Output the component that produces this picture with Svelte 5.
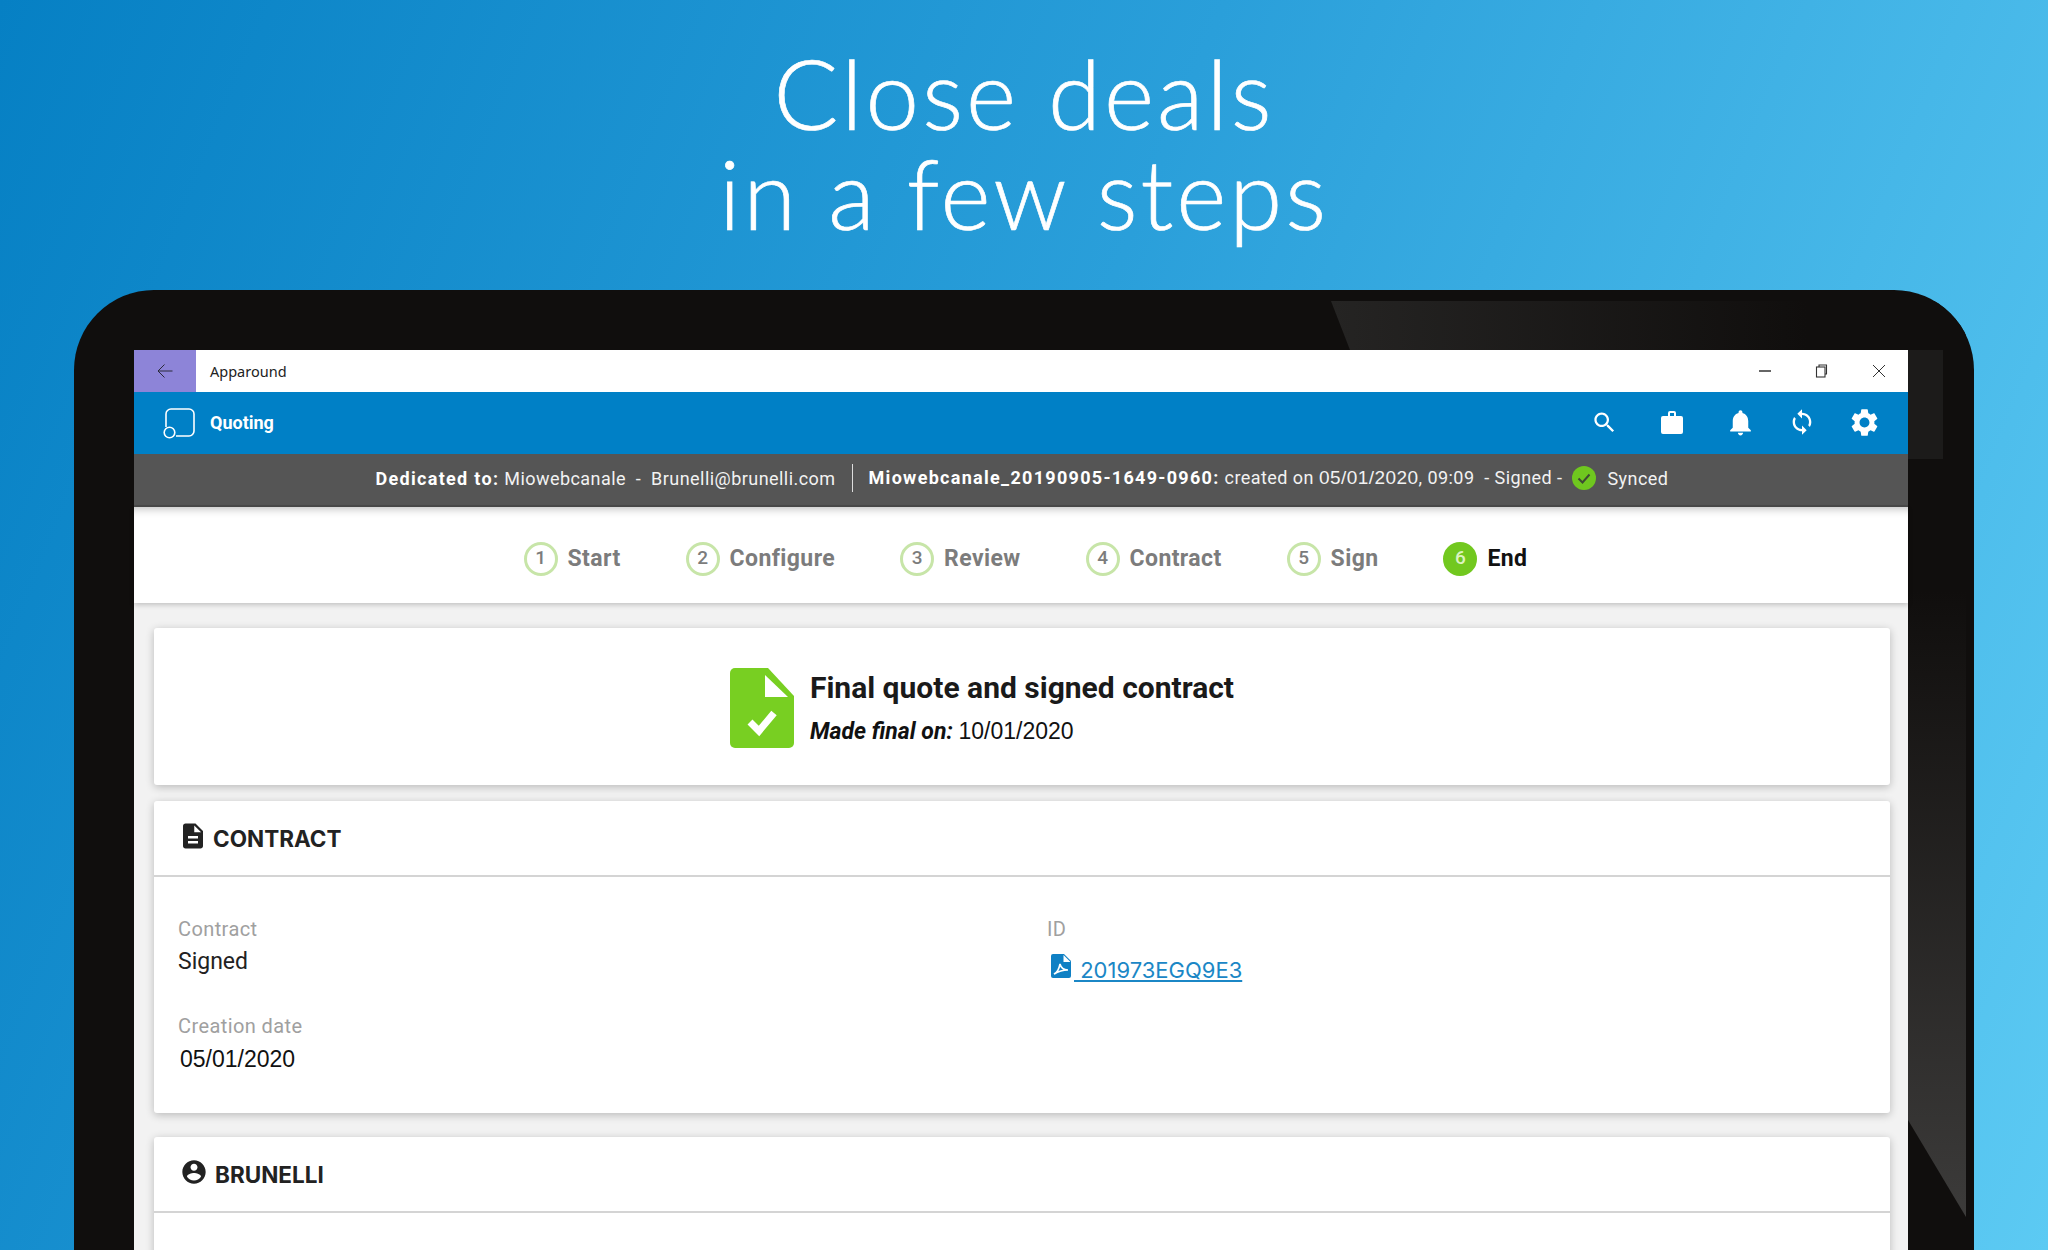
<script>
	const steps = [
		{ n: 1, label: 'Start' },
		{ n: 2, label: 'Configure' },
		{ n: 3, label: 'Review' },
		{ n: 4, label: 'Contract' },
		{ n: 5, label: 'Sign' },
		{ n: 6, label: 'End', active: true }
	];
</script>

<div class="page">
	<h1 class="headline">Close deals<br />in a few steps</h1>

	<div class="tablet">
		<svg class="glare" width="1900" height="960" viewBox="0 0 1900 960">
			<defs>
				<linearGradient id="glareTop" x1="0" y1="0" x2="1" y2="0">
					<stop offset="0" stop-color="#252423" />
					<stop offset="0.75" stop-color="#100e0d" />
				</linearGradient>
				<linearGradient id="glareSide" gradientUnits="userSpaceOnUse" x1="0" y1="300" x2="0" y2="927">
					<stop offset="0" stop-color="#100e0d" />
					<stop offset="1" stop-color="#3c3b3a" />
				</linearGradient>
			</defs>
			<polygon points="1257,11 1892,11 1892,60 1276,60" fill="url(#glareTop)" />
			<polygon points="1834,60 1892,60 1892,927 1834,830" fill="url(#glareSide)" />
			<rect x="1834" y="60" width="35" height="109" fill="#1c1b1a" />
		</svg>

		<div class="window">
			<div class="titlebar">
				<div class="back">
					<svg width="16" height="16" viewBox="0 0 16 16" fill="none" stroke="#2b2b3a" stroke-width="1">
						<path d="M15.500 8H1M7.500 1.500 1 8l6.500 6.500" />
					</svg>
				</div>
				<span class="app-name">Apparound</span>
				<div class="win-controls">
					<svg width="14" height="14" viewBox="0 0 14 14" fill="none" stroke="#333" stroke-width="1.300">
						<path d="M1 7h12" />
					</svg>
					<svg width="14" height="14" viewBox="0 0 14 14" fill="none" stroke="#333" stroke-width="1.100">
						<path d="M4 3V1h7.500v9H10" />
						<rect x="1.500" y="3" width="8.500" height="10" />
					</svg>
					<svg width="14" height="14" viewBox="0 0 14 14" fill="none" stroke="#333" stroke-width="1">
						<path d="M1 1l12 12M13 1 1 13" />
					</svg>
				</div>
			</div>

			<header class="appbar">
				<svg class="logo" width="32" height="32" viewBox="0 0 32 32" fill="none" stroke="#fff" stroke-width="1.600">
					<path d="M3 20V7a5 5 0 0 1 5-5h18a5 5 0 0 1 5 5v17a5 5 0 0 1-5 5H13" />
					<circle cx="6.500" cy="25.500" r="5.300" />
				</svg>
				<span class="app-title">Quoting</span>
				<div class="actions">
					<svg class="i-search" width="27" height="27" viewBox="0 0 24 24" fill="#fff">
						<path d="M15.500 14h-.79l-.28-.27C15.410 12.590 16 11.110 16 9.500 16 5.910 13.090 3 9.500 3S3 5.910 3 9.500 5.910 16 9.500 16c1.610 0 3.090-.59 4.230-1.570l.27.28v.79l5 4.990L20.490 19l-4.990-5zm-6 0C7.010 14 5 11.990 5 9.500S7.010 5 9.500 5 14 7.010 14 9.500 11.990 14 9.500 14z" />
					</svg>
					<svg class="i-bag" width="24" height="24" viewBox="0 0 24 24" fill="#fff">
						<path d="M3 6h5V3a2 2 0 0 1 2-2h4a2 2 0 0 1 2 2v3h5a2 2 0 0 1 2 2v14a2 2 0 0 1-2 2H3a2 2 0 0 1-2-2V8a2 2 0 0 1 2-2zm7-3v3h4V3h-4z" fill-rule="evenodd" />
					</svg>
					<svg class="i-bell" width="31" height="31" viewBox="0 0 24 24" fill="#fff">
						<path d="M12 22c1.100 0 2-.9 2-2h-4c0 1.100.89 2 2 2zm6-6v-5c0-3.070-1.640-5.640-4.500-6.320V4c0-.83-.67-1.500-1.500-1.500s-1.500.67-1.500 1.500v.68C7.630 5.360 6 7.920 6 11v5l-2 2v1h16v-1l-2-2z" />
					</svg>
					<svg class="i-sync" width="28" height="28" viewBox="0 0 24 24" fill="#fff">
						<path d="M12 4V1L8 5l4 4V6c3.310 0 6 2.690 6 6 0 1.010-.25 1.970-.7 2.800l1.460 1.460C19.540 15.030 20 13.570 20 12c0-4.420-3.580-8-8-8zm0 14c-3.310 0-6-2.690-6-6 0-1.010.25-1.970.7-2.800L5.240 7.740C4.460 8.970 4 10.430 4 12c0 4.420 3.580 8 8 8v3l4-4-4-4v3z" />
					</svg>
					<svg class="i-gear" width="33" height="33" viewBox="0 0 24 24" fill="#fff">
						<path d="M19.140 12.940c.04-.3.06-.61.06-.94 0-.32-.02-.64-.07-.94l2.030-1.580c.18-.14.23-.41.12-.61l-1.920-3.320c-.12-.22-.37-.29-.59-.22l-2.390.96c-.5-.38-1.030-.7-1.620-.94l-.36-2.540c-.04-.24-.24-.41-.48-.41h-3.840c-.24 0-.43.17-.47.41l-.36 2.540c-.59.24-1.130.57-1.620.94l-2.390-.96c-.22-.08-.47 0-.59.22L2.740 8.870c-.12.21-.08.47.12.61l2.030 1.580c-.05.3-.09.63-.09.94s.02.64.07.94l-2.030 1.580c-.18.14-.23.41-.12.61l1.920 3.320c.12.22.37.29.59.22l2.390-.96c.5.38 1.030.7 1.620.94l.36 2.540c.05.24.24.41.48.41h3.840c.24 0 .44-.17.47-.41l.36-2.540c.59-.24 1.130-.56 1.620-.94l2.390.96c.22.08.47 0 .59-.22l1.920-3.320c.12-.22.07-.47-.12-.61l-2.010-1.580zM12 15.600c-1.980 0-3.600-1.620-3.600-3.600s1.620-3.600 3.600-3.600 3.600 1.620 3.600 3.600-1.620 3.600-3.600 3.600z" />
					</svg>
				</div>
			</header>

			<div class="infobar">
				<span><b>Dedicated to:</b> Miowebcanale &nbsp;-&nbsp; Brunelli@brunelli.com</span>
				<i class="sep"></i>
				<span><b>Miowebcanale_20190905-1649-0960:</b> created on <span class="num">05/01/2020</span>, 09:09 &nbsp;- Signed -</span>
				<svg class="synced" width="24" height="24" viewBox="0 0 24 24">
					<circle cx="12" cy="12" r="12" fill="#6fc71f" />
					<path d="M6.500 12.500l4 4 7-8" fill="none" stroke="#3d4a33" stroke-width="2" />
				</svg>
				<span>Synced</span>
			</div>

			<nav class="stepper">
				{#each steps as step}
					<div class="step" class:active={step.active}>
						<span class="bullet">{step.n}</span>
						<span class="step-label">{step.label}</span>
					</div>
				{/each}
			</nav>

			<main class="content">
				<section class="card final">
					<svg width="64" height="80" viewBox="0 0 64 80">
						<path d="M5 0h33l26 28v47a5 5 0 0 1-5 5H5a5 5 0 0 1-5-5V5a5 5 0 0 1 5-5z" fill="#78cf22" />
						<path d="M35 7v22h23z" fill="#fff" />
						<path d="M20 54l9 9 15-18" fill="none" stroke="#fff" stroke-width="7" />
					</svg>
					<div class="final-text">
						<h2>Final quote and signed contract</h2>
						<p><em>Made final on:</em> <span class="num">10/01/2020</span></p>
					</div>
				</section>

				<section class="card">
					<div class="card-head">
						<svg width="30" height="30" viewBox="0 0 24 24" fill="#222">
							<path d="M14 2H6c-1.100 0-1.990.9-1.990 2L4 20c0 1.100.89 2 1.990 2H18c1.100 0 2-.9 2-2V8l-6-6zm2 16H8v-2h8v2zm0-4H8v-2h8v2zm-3-5V3.500L18.500 9H13z" />
						</svg>
						<h3>CONTRACT</h3>
					</div>
					<div class="fields">
						<div class="col">
							<div class="field">
								<span class="label">Contract</span>
								<span class="value">Signed</span>
							</div>
							<div class="field">
								<span class="label">Creation date</span>
								<span class="value num date">05/01/2020</span>
							</div>
						</div>
						<div class="col">
							<div class="field">
								<span class="label">ID</span>
								<a class="link" href="#top">
									<svg width="20" height="24" viewBox="0 0 20 24">
										<path d="M2 0h11l7 7v15a2 2 0 0 1-2 2H2a2 2 0 0 1-2-2V2a2 2 0 0 1 2-2z" fill="#0f80c4" />
										<path d="M12.500 1v7h7z" fill="#fff" />
										<path d="M3 20c3-1 5-5 6-10 1 4 3 6 8 6-5 0-9 1-14 4z" fill="none" stroke="#fff" stroke-width="1.600" />
									</svg>
									<span>&nbsp;201973EGQ9E3</span>
								</a>
							</div>
						</div>
					</div>
				</section>

				<section class="card third">
					<div class="card-head">
						<svg class="person" width="28" height="28" viewBox="0 0 24 24" fill="#222">
							<path d="M12 2C6.480 2 2 6.480 2 12s4.480 10 10 10 10-4.480 10-10S17.520 2 12 2zm0 3c1.660 0 3 1.340 3 3s-1.340 3-3 3-3-1.340-3-3 1.340-3 3-3zm0 14.200c-2.500 0-4.710-1.280-6-3.220.030-1.990 4-3.080 6-3.080 1.990 0 5.970 1.090 6 3.080-1.290 1.940-3.500 3.220-6 3.220z" />
						</svg>
						<h3>BRUNELLI</h3>
					</div>
					<div class="card-rest"></div>
				</section>
			</main>
		</div>
	</div>
</div>

<style>
	:global(body) {
		margin: 0;
	}

	.page {
		height: 1250px;
		overflow: hidden;
		background: linear-gradient(112deg, #0680c4 0%, #2a9fda 48%, #5ccaf3 100%);
		font-family: Roboto, sans-serif;
	}

	.headline {
		margin: 0;
		height: 290px;
		box-sizing: border-box;
		padding-top: 43px;
		text-align: center;
		font-family: Lato, sans-serif;
		font-weight: 300;
		font-size: 96px;
		line-height: 100px;
		letter-spacing: 3px;
		-webkit-text-stroke: 0.7px #fff;
		color: #fff;
	}

	.tablet {
		position: relative;
		width: 1900px;
		margin-left: 74px;
		height: 960px;
		box-sizing: border-box;
		padding: 60px 66px 0 60px;
		overflow: hidden;
		background: #100e0d;
		border-radius: 80px 80px 0 0;
	}

	.glare {
		position: absolute;
		left: 0;
		top: 0;
	}

	.window {
		position: relative;
		height: 900px;
		display: flex;
		flex-direction: column;
		background: #f2f2f2;
	}

	.titlebar {
		height: 42px;
		flex: none;
		display: flex;
		align-items: center;
		background: #fff;
	}

	.back {
		width: 62px;
		height: 42px;
		display: flex;
		align-items: center;
		justify-content: center;
		background: #8d84d8;
	}

	.app-name {
		margin-left: 14px;
		font-family: 'Noto Sans', sans-serif;
		font-size: 14.500px;
		color: #222;
	}

	.win-controls {
		margin-left: auto;
		margin-right: 22px;
		display: flex;
		gap: 43px;
	}

	.appbar {
		height: 62px;
		flex: none;
		display: flex;
		align-items: center;
		padding: 0 27px 2px 29px;
		box-sizing: border-box;
		background: #0080c6;
	}

	.logo {
		margin-top: 2px;
	}

	.app-title {
		margin-left: 15px;
		font-size: 18px;
		font-weight: 700;
		color: #fff;
	}

	.actions {
		margin-left: auto;
		display: flex;
		align-items: center;
	}

	.i-bag {
		margin-left: 42px;
	}

	.i-bell {
		margin-left: 41px;
	}

	.i-sync {
		margin-left: 32px;
	}

	.i-gear {
		margin-left: 32px;
	}

	.infobar {
		height: 53px;
		flex: none;
		box-sizing: border-box;
		display: flex;
		align-items: center;
		justify-content: center;
		padding-left: 2px;
		padding-bottom: 3px;
		background: #555;
		border-bottom: 2px solid #4a4a4a;
		font-size: 18px;
		letter-spacing: 0.45px;
		color: #f2f2f2;
		white-space: nowrap;
	}

	.infobar b {
		font-weight: 700;
		letter-spacing: 1.300px;
		color: #fff;
	}

	.sep {
		width: 1px;
		height: 28px;
		margin: 0 16px;
		background: #ddd;
	}

	.synced {
		margin: 0 11px 0 10px;
	}

	.num {
		font-family: 'Liberation Sans', sans-serif;
	}

	.infobar .num {
		font-size: 19px;
	}

	.stepper {
		height: 96px;
		flex: none;
		box-sizing: border-box;
		display: flex;
		align-items: center;
		justify-content: center;
		gap: 65px;
		padding: 7px 0 0 9px;
		background: #fff;
		box-shadow: inset 0 9px 8px -7px rgba(0, 0, 0, 0.25), 0 2px 5px rgba(0, 0, 0, 0.2);
		position: relative;
	}

	.step {
		display: flex;
		align-items: center;
		gap: 10px;
		font-size: 23px;
		font-weight: 700;
		letter-spacing: 0.4px;
		color: #7c7c7c;
	}

	.bullet {
		width: 34px;
		height: 34px;
		box-sizing: border-box;
		display: flex;
		align-items: center;
		justify-content: center;
		padding-bottom: 2px;
		border: 3px solid #c7e5a8;
		border-radius: 50%;
		font-size: 19px;
		font-weight: 500;
		letter-spacing: 0;
	}

	.step.active {
		color: #111;
	}

	.step.active .bullet {
		border-color: #72c81f;
		background: #72c81f;
		color: #dcf3c0;
	}

	.content {
		flex: 1;
		display: flex;
		flex-direction: column;
		gap: 16px;
		padding: 25px 18px 0 20px;
	}

	.card {
		flex: none;
		background: #fff;
		border-radius: 3px;
		box-shadow: 0 2px 8px rgba(0, 0, 0, 0.24);
	}

	.third {
		margin-top: 8px;
	}

	.final {
		height: 157px;
		display: flex;
		align-items: center;
		justify-content: center;
		gap: 16px;
		padding: 3px 80px 0 0;
		box-sizing: border-box;
	}

	.final-text h2 {
		margin: 0 0 12px;
		font-size: 30px;
		line-height: 34px;
		font-weight: 700;
		color: #1a1a1a;
	}

	.final-text p {
		margin: 0;
		font-size: 23px;
		line-height: 28px;
		color: #111;
	}

	.final-text em {
		font-weight: 700;
		font-style: italic;
	}

	.card-head {
		height: 76px;
		display: flex;
		align-items: center;
		gap: 5px;
		padding-left: 24px;
		border-bottom: 2px solid #d4d4d4;
		box-sizing: border-box;
	}

	.card-head svg {
		margin-top: -5px;
	}

	.card-head .person {
		margin-left: 2px;
		margin-right: 2px;
	}

	.card-head h3 {
		margin: 0;
		font-family: Inter, sans-serif;
		font-size: 22.500px;
		font-weight: 700;
		color: #222;
	}

	.fields {
		height: 236px;
		box-sizing: border-box;
		display: grid;
		grid-template-columns: 869px 1fr;
		padding: 40px 24px 0;
	}

	.col {
		display: flex;
		flex-direction: column;
		gap: 39px;
	}

	.field {
		display: flex;
		flex-direction: column;
		gap: 8px;
	}

	.label {
		font-size: 20px;
		line-height: 24px;
		letter-spacing: 0.4px;
		color: #a0a0a0;
	}

	.value {
		font-size: 23px;
		line-height: 26px;
		color: #222;
	}

	.date {
		margin-left: 2px;
		color: #111;
	}

	.link {
		display: flex;
		align-items: flex-end;
		gap: 3px;
		margin: 5px 0 0 4px;
		font-family: Inter, sans-serif;
		font-size: 22px;
		line-height: 26px;
		color: #1b87c6;
	}

	.link svg {
		margin-bottom: 5px;
	}

	.card-rest {
		height: 200px;
	}
</style>
